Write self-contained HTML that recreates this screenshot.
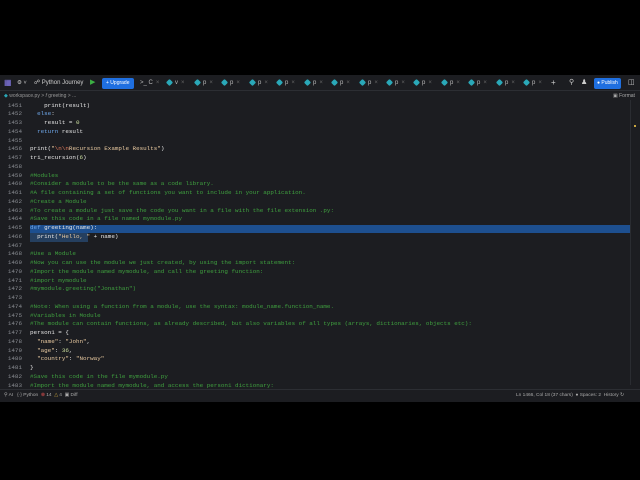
<!DOCTYPE html>
<html><head><style>
*{margin:0;padding:0;box-sizing:border-box}
body{width:640px;height:480px;background:#000;position:relative;overflow:hidden;font-family:"Liberation Sans",sans-serif}
#app{position:absolute;left:0;top:75px;width:640px;height:327px;background:#1c1d21}
#top{position:absolute;left:0;top:0;width:640px;height:16px;background:#1c1d21;border-bottom:1px solid #2c2e33;font-size:5.5px;color:#d0d0d0}
.t{position:absolute;top:3px;height:10px;line-height:10px;white-space:nowrap}
.tab{position:absolute;top:3px;height:10px;line-height:10px;font-size:6px;color:#bbb}
.tab i{display:inline-block;width:5px;height:5px;background:#2aa8b8;transform:rotate(45deg);margin-right:3px;vertical-align:middle;border-radius:1px}
.tab b{font-weight:normal;color:#666;margin-left:3px}
#bc{position:absolute;left:4px;top:18px;font-size:5px;color:#999}
.ln{position:absolute;left:0;width:22px;text-align:right;font-family:"Liberation Mono",monospace;font-size:5.9px;color:#8a8d93;height:8.75px;line-height:8.75px}
.c{position:absolute;left:30px;font-family:"Liberation Mono",monospace;font-size:5.9px;color:#e6e6e6;white-space:pre;height:8.75px;line-height:8.75px}
.cm{color:#3fa03f}.s{color:#e8c9a0}.k{color:#6ea6e8}.n{color:#cde0a0}.e{color:#e07a5a}
#status{position:absolute;left:0;top:314px;width:640px;height:13px;border-top:1px solid #2c2e33;font-size:4.8px;color:#aaa;line-height:12px}
</style></head><body>
<div id="app">
<div id="top">
<div class="t" style="left:4px;color:#8a7ef0;font-size:8px">&#9638;</div>
<div class="t" style="left:17px;color:#ccc">&#9881; &#709;</div>
<div class="t" style="left:34px;color:#ccc;font-size:6px">&#9741; Python Journey</div>
<div class="t" style="left:90px;color:#3cb043;font-size:7px">&#9654;</div>
<div class="t" style="left:102px;background:#1f6fe0;color:#fff;padding:0 4px;border-radius:2px;height:11px;top:2.5px;font-size:5px">+ Upgrade</div>
<div class="tab" style="left:140px">&gt;_ C<b>×</b></div>
<div class="tab" style="left:167px"><i></i>v<b>×</b></div>
<div class="tab" style="left:195px"><i></i>p<b>×</b></div>
<div class="tab" style="left:222px"><i></i>p<b>×</b></div>
<div class="tab" style="left:250px"><i></i>p<b>×</b></div>
<div class="tab" style="left:277px"><i></i>p<b>×</b></div>
<div class="tab" style="left:305px"><i></i>p<b>×</b></div>
<div class="tab" style="left:332px"><i></i>p<b>×</b></div>
<div class="tab" style="left:360px"><i></i>p<b>×</b></div>
<div class="tab" style="left:387px"><i></i>p<b>×</b></div>
<div class="tab" style="left:414px"><i></i>p<b>×</b></div>
<div class="tab" style="left:442px"><i></i>p<b>×</b></div>
<div class="tab" style="left:469px"><i></i>p<b>×</b></div>
<div class="tab" style="left:497px"><i></i>p<b>×</b></div>
<div class="tab" style="left:524px"><i></i>p<b>×</b></div>
<div class="t" style="left:551px;color:#ccc;font-size:8px">+</div>
<div class="t" style="left:569px;color:#ccc;font-size:7px">&#9906;</div>
<div class="t" style="left:581px;color:#ccc;font-size:7px">&#9823;</div>
<div class="t" style="left:594px;background:#1f6fe0;color:#fff;padding:0 3px;border-radius:2px;height:11px;top:2.5px;font-size:5px">&#9679; Publish</div>
<div class="t" style="left:628px;color:#ccc;font-size:7px">&#9707;</div>
</div>
<div id="bc"><span style="color:#2aa8b8">&#9670;</span> workspace.py &gt; <i>f</i> greeting &gt; ...</div>
<div style="position:absolute;left:613px;top:18px;font-size:5px;color:#aaa">&#9635; Format</div>
<div style="position:absolute;left:630px;top:25px;width:1px;height:285px;background:#2a2c31"></div>
<div style="position:absolute;left:634px;top:50px;width:2px;height:2px;background:#c9a640"></div>
<div style="position:absolute;left:30px;top:149.5px;width:600px;height:8.75px;background:#1d4f8f"></div>
<div style="position:absolute;left:30px;top:158.25px;width:58px;height:8.75px;background:#253f5f"></div>
<div id="code"></div>
<div id="status">
<span style="position:absolute;left:4px">&#9906; AI &nbsp; {·} Python &nbsp;<span style="color:#e05050">&#8855;</span> 14 &nbsp;<span style="color:#c9a640">&#9651;</span> 4 &nbsp;&#9635; Diff</span>
<span style="position:absolute;left:516px">Ln 1466, Col 18 (37 chars) &nbsp;&#9679; Spaces: 2 &nbsp;History &#8635;</span>
</div>
</div>
<script>
var L=[
'    print(result)',
'  <span class="k">else</span>:',
'    result = <span class="n">0</span>',
'  <span class="k">return</span> result',
'',
'print(<span class="s">"<span class="e">\\n\\n</span>Recursion Example Results"</span>)',
'tri_recursion(<span class="n">6</span>)',
'',
'<span class="cm">#Modules</span>',
'<span class="cm">#Consider a module to be the same as a code library.</span>',
'<span class="cm">#A file containing a set of functions you want to include in your application.</span>',
'<span class="cm">#Create a Module</span>',
'<span class="cm">#To create a module just save the code you want in a file with the file extension .py:</span>',
'<span class="cm">#Save this code in a file named mymodule.py</span>',
'<span class="k">def</span> greeting(name):',
'  print(<span class="s">"Hello, "</span> + name)',
'',
'<span class="cm">#Use a Module</span>',
'<span class="cm">#Now you can use the module we just created, by using the import statement:</span>',
'<span class="cm">#Import the module named mymodule, and call the greeting function:</span>',
'<span class="cm">#import mymodule</span>',
'<span class="cm">#mymodule.greeting("Jonathan")</span>',
'',
'<span class="cm">#Note: When using a function from a module, use the syntax: module_name.function_name.</span>',
'<span class="cm">#Variables in Module</span>',
'<span class="cm">#The module can contain functions, as already described, but also variables of all types (arrays, dictionaries, objects etc):</span>',
'person1 = {',
'  <span class="s">"name"</span>: <span class="s">"John"</span>,',
'  <span class="s">"age"</span>: <span class="n">36</span>,',
'  <span class="s">"country"</span>: <span class="s">"Norway"</span>',
'}',
'<span class="cm">#Save this code in the file mymodule.py</span>',
'<span class="cm">#Import the module named mymodule, and access the person1 dictionary:</span>'];
var h='';for(var i=0;i<L.length;i++){var t=26.5+i*8.75;h+='<div class="ln" style="top:'+t+'px">'+(1451+i)+'</div><div class="c" style="top:'+t+'px">'+L[i]+'</div>';}
document.getElementById('code').innerHTML=h;
</script>
</body></html>
